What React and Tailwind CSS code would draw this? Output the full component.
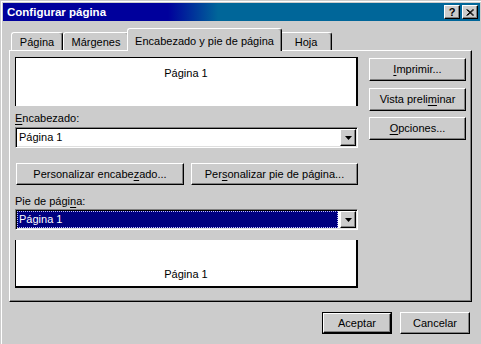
import React from 'react';

const raised =
  'border border-t-white border-l-white border-r-black border-b-black shadow-[inset_-1px_-1px_0_#808080] bg-[#cccccc]';

function Btn({ children, className = '' }) {
  return (
    <div className={`flex items-center justify-center leading-[13px] ${raised} ${className}`}>
      {children}
    </div>
  );
}

function U({ children }) {
  return <span className="underline decoration-1 underline-offset-[2px]">{children}</span>;
}

function Arrow() {
  return (
    <svg width="7" height="4" viewBox="0 0 7 4">
      <polygon points="0,0 7,0 3.5,4" fill="#000" />
    </svg>
  );
}

function Combo({ selected }) {
  return (
    <div className="flex h-[21px] w-[343px] border border-t-[#808080] border-l-[#808080] border-r-white border-b-white bg-white p-px shadow-[inset_1px_1px_0_#000,inset_-1px_-1px_0_#dfdfdf]">
      {selected ? (
        <div className="mr-[2px] flex flex-1 items-center border border-dotted border-[#c0c0ff] bg-[#000080] pl-[1px] leading-[13px] text-white">
          Página 1
        </div>
      ) : (
        <div className="mr-[2px] flex flex-1 items-center pl-[2px] leading-[13px]">Página 1</div>
      )}
      <div className={`flex h-full w-[16px] items-center justify-center ${raised}`}>
        <Arrow />
      </div>
    </div>
  );
}

function Tab({ label, active, className = '' }) {
  if (active) {
    return (
      <div
        className={`relative z-10 -mx-[2px] -mb-px flex h-[23px] items-start justify-center rounded-t-[3px] border border-b-0 border-t-white border-l-white border-r-black bg-[#cccccc] pt-[6px] leading-[13px] shadow-[inset_-1px_0_0_#808080] ${className}`}
      >
        {label}
      </div>
    );
  }
  return (
    <div
      className={`flex h-[18px] items-start justify-center rounded-t-[3px] border border-b-0 border-t-white border-l-white border-r-black bg-[#cccccc] pt-[3px] leading-[13px] shadow-[inset_-1px_0_0_#808080] ${className}`}
    >
      {label}
    </div>
  );
}

export default function App() {
  return (
    <div className="h-[344px] w-[481px] overflow-hidden bg-[#cccccc] pl-px pt-px font-['Liberation_Sans',Arial,sans-serif] text-[11px] text-black">
      <div className="h-full border-l border-t border-white">
        {/* Title bar */}
        <div className="ml-px mr-[1px] mt-px flex h-[18px] items-center bg-[linear-gradient(to_right,#00009c_165px,#006699_215px)] pl-[4px] pr-[2px]">
          <div className="flex-1 text-[11.5px] font-bold leading-[14px] text-white">Configurar página</div>
          <div className={`flex h-[14px] w-[16px] items-center justify-center text-[11px] font-bold leading-[12px] ${raised}`}>
            ?
          </div>
          <div className={`ml-[2px] flex h-[14px] w-[16px] items-center justify-center ${raised}`}>
            <svg width="8" height="7" viewBox="0 0 8 7">
              <path d="M0.5 0.5 L7 6.5 M1.5 0.5 L8 6.5 M7 0.5 L0.5 6.5 M8 0.5 L1.5 6.5" stroke="#000" strokeWidth="1" />
            </svg>
          </div>
        </div>

        {/* Tabs */}
        <div className="ml-[9px] mt-[7px] flex items-end">
          <Tab label="Página" className="w-[52px]" />
          <Tab label="Márgenes" className="w-[66px]" />
          <Tab label="Encabezado y pie de página" active className="w-[155px]" />
          <Tab label="Hoja" className="w-[52px]" />
        </div>

        {/* Panel */}
        <div className="ml-[7px] flex h-[252px] w-[463px] border border-t-white border-l-white border-r-black border-b-black pl-[5px] shadow-[inset_-1px_-1px_0_#808080]">
          <div className="flex w-[343px] flex-col pt-[6px]">
            <div className="flex h-[49px] w-[343px] justify-center border-l border-t border-r-2 border-black bg-white pt-[9px] leading-[13px]">
              Página 1
            </div>
            <div className="flex h-[21px] items-end pb-[2px] leading-[13px]">
              <U>E</U>ncabezado:
            </div>
            <Combo />
            <div className="ml-px mt-[15px] flex gap-[7px]">
              <Btn className="h-[22px] w-[169px]">
                Personalizar encabe<U>z</U>ado...
              </Btn>
              <Btn className="h-[22px] w-[168px]">
                Per<U>s</U>onalizar pie de página...
              </Btn>
            </div>
            <div className="flex h-[24px] items-end pb-[1px] leading-[13px]">
              Pie de pági<U>n</U>a:
            </div>
            <Combo selected />
            <div className="mt-[10px] flex h-[48px] w-[343px] items-end justify-center border-b-2 border-l border-r-2 border-black bg-white pb-[5px] leading-[13px]">
              Página 1
            </div>
          </div>
          <div className="ml-[11px] flex w-[97px] flex-col pt-[7px]">
            <Btn className="h-[23px]">
              <U>I</U>mprimir...
            </Btn>
            <Btn className="mt-[7px] h-[23px]">
              Vista preli<U>m</U>inar
            </Btn>
            <Btn className="mt-[6px] h-[23px]">
              <U>O</U>pciones...
            </Btn>
          </div>
        </div>

        {/* Bottom buttons */}
        <div className="mt-[10px] flex justify-end gap-[8px] pr-[11px]">
          <div className="h-[22px] w-[70px] border border-black">
            <Btn className="h-full w-full">Aceptar</Btn>
          </div>
          <Btn className="h-[22px] w-[70px]">Cancelar</Btn>
        </div>
      </div>
    </div>
  );
}
